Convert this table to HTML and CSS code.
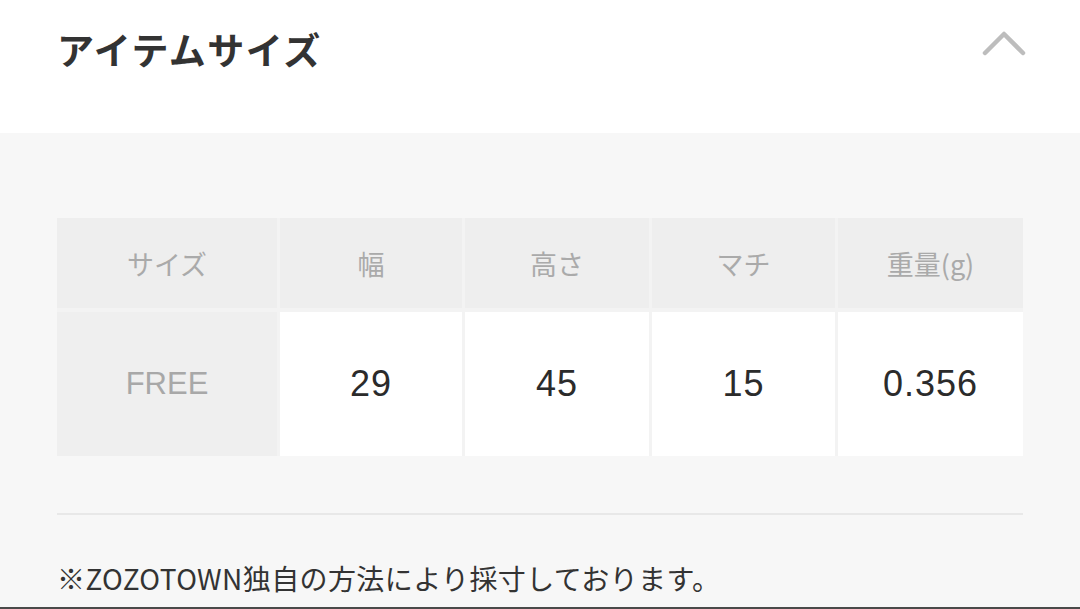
FILE: index.html
```html
<!DOCTYPE html>
<html lang="ja">
<head>
<meta charset="utf-8">
<link rel="stylesheet" href="styles.css">
</head>
<body>
<div class="page">
  <header class="head">
    <h2 class="title">アイテムサイズ</h2>
    <svg class="chev" width="44" height="28" viewBox="0 0 44 28"><polyline points="3,24 22,5 41,24" fill="none" stroke="#bdbdbd" stroke-width="4.5" stroke-linecap="round" stroke-linejoin="round"/></svg>
  </header>
  <section class="body">
    <div class="table">
      <div class="cell th">サイズ</div>
      <div class="cell th">幅</div>
      <div class="cell th">高さ</div>
      <div class="cell th">マチ</div>
      <div class="cell th">重量(g)</div>
      <div class="cell rh">FREE</div>
      <div class="cell td">29</div>
      <div class="cell td">45</div>
      <div class="cell td">15</div>
      <div class="cell td">0.356</div>
    </div>
    <hr class="rule">
    <p class="note">※ZOZOTOWN独自の方法により採寸しております。</p>
  </section>
  <div class="edge"></div>
</div>
</body>
</html>
```

FILE: styles.css
```css
html, body {
  margin: 0;
  padding: 0;
  background: #f7f7f7;
}
.page {
  width: 1080px;
  height: 609px;
  display: flex;
  flex-direction: column;
  font-family: "Noto Sans CJK JP", "Noto Sans", sans-serif;
  color: #333;
}
.head {
  height: 133px;
  background: #fff;
  display: flex;
  align-items: flex-start;
  justify-content: space-between;
  padding: 0 54px 0 57px;
  box-sizing: border-box;
}
.title {
  margin: 23px 0 0;
  font-size: 37px;
  font-weight: 700;
  line-height: 52px;
  letter-spacing: 1.5px;
  color: #333;
}
.chev {
  margin-top: 29px;
}
.body {
  flex: 1;
  background: #f7f7f7;
  padding: 85px 57px 0;
  display: flex;
  flex-direction: column;
}
.table {
  display: grid;
  grid-template-columns: 220px 182px 184px 183px 185px;
  grid-template-rows: 90px 144px;
  gap: 4px 3px;
  background: #f3f3f3;
}
.cell {
  display: flex;
  align-items: center;
  justify-content: center;
}
.th {
  background: #eeeeee;
  color: #aaaaaa;
  font-size: 27px;
  font-weight: 400;
}
.rh {
  background: #efefef;
  color: #a8a8a8;
  font-family: "Liberation Sans", "Noto Sans CJK JP", sans-serif;
  font-size: 31px;
}
.td {
  background: #fff;
  color: #2b2b2b;
  font-family: "Liberation Sans", "Noto Sans CJK JP", sans-serif;
  font-size: 36px;
  letter-spacing: 1px;
}
.rule {
  margin: 57px 0 0;
  border: 0;
  height: 2px;
  background: #e8e8e8;
}
.note {
  margin: 43px 0 0;
  font-size: 28px;
  line-height: 40px;
  letter-spacing: 0.4px;
  color: #333;
}
.edge {
  height: 2px;
  background: #4a4a4a;
}
```
